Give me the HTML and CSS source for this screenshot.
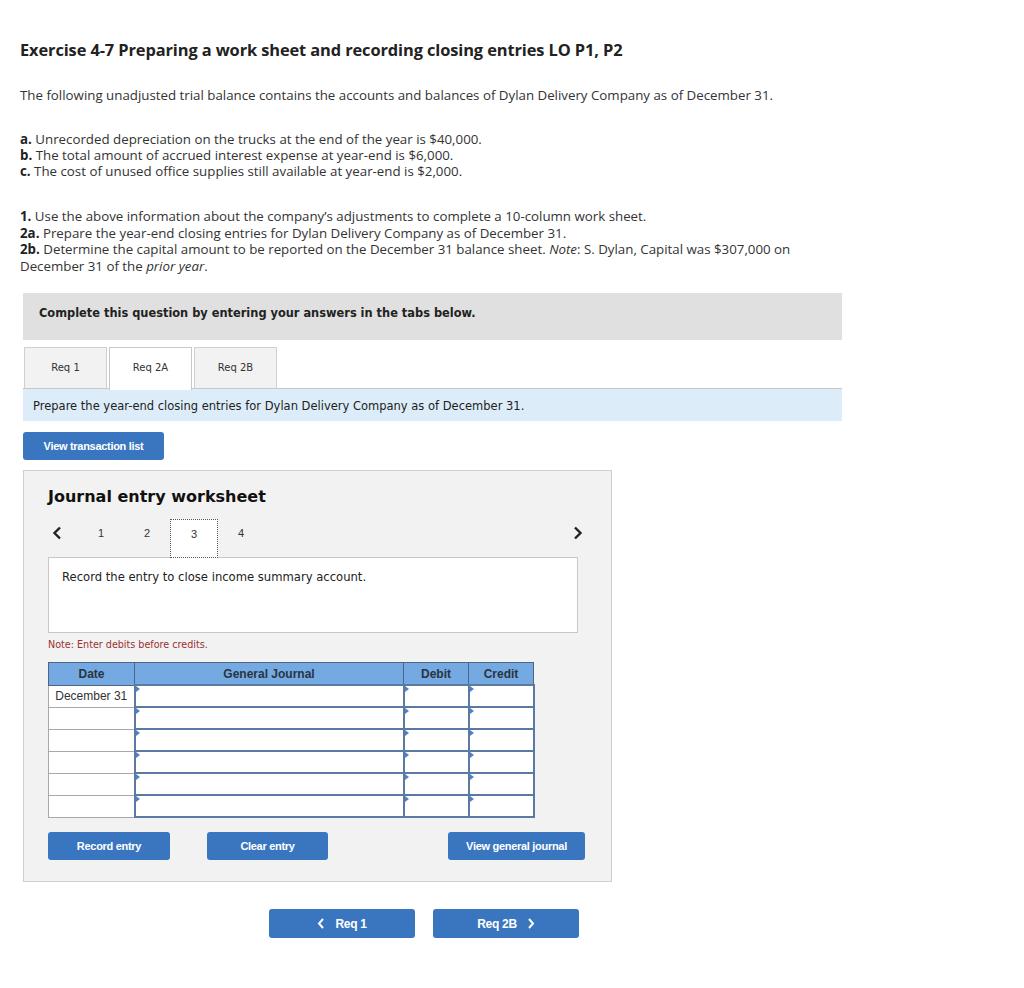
FILE: index.html
```html
<!DOCTYPE html>
<html lang="en">
<head>
<meta charset="UTF-8">
<title>Exercise 4-7</title>
<link rel="stylesheet" href="styles.css">
</head>
<body>

<h1 class="title">Exercise 4-7 Preparing a work sheet and recording closing entries LO P1, P2</h1>

<p class="intro">The following unadjusted trial balance contains the accounts and balances of Dylan Delivery Company as of December 31.</p>

<div class="facts">
  <div><b>a.</b> Unrecorded depreciation on the trucks at the end of the year is $40,000.</div>
  <div><b>b.</b> The total amount of accrued interest expense at year-end is $6,000.</div>
  <div><b>c.</b> The cost of unused office supplies still available at year-end is $2,000.</div>
</div>

<div class="reqs">
  <div><b>1.</b> Use the above information about the company’s adjustments to complete a 10-column work sheet.</div>
  <div><b>2a.</b> Prepare the year-end closing entries for Dylan Delivery Company as of December 31.</div>
  <div><b>2b.</b> Determine the capital amount to be reported on the December 31 balance sheet. <i>Note</i>: S. Dylan, Capital was $307,000 on December 31 of the <i>prior year</i>.</div>
</div>

<div class="question">
  <div class="banner">Complete this question by entering your answers in the tabs below.</div>

  <div class="tabs">
    <div class="tab">Req 1</div>
    <div class="tab active">Req 2A</div>
    <div class="tab">Req 2B</div>
  </div>
  <div class="instruction">Prepare the year-end closing entries for Dylan Delivery Company as of December 31.</div>

  <button class="btn btn-list">View transaction list</button>

  <div class="worksheet">
    <h2>Journal entry worksheet</h2>

    <div class="pager">
      <span class="arrow">
        <svg width="10" height="14" viewBox="0 0 10 14"><path d="M8 1.5 L2.5 7 L8 12.5" fill="none" stroke="#222" stroke-width="2.4"/></svg>
      </span>
      <span class="page">1</span>
      <span class="page">2</span>
      <span class="page current">3</span>
      <span class="page">4</span>
      <span class="arrow arrow-right">
        <svg width="10" height="14" viewBox="0 0 10 14"><path d="M2 1.5 L7.5 7 L2 12.5" fill="none" stroke="#222" stroke-width="2.4"/></svg>
      </span>
    </div>

    <div class="entry-box">Record the entry to close income summary account.</div>

    <div class="note">Note: Enter debits before credits.</div>

    <table class="journal">
      <thead>
        <tr>
          <th class="c-date">Date</th>
          <th class="c-gj">General Journal</th>
          <th class="c-amt">Debit</th>
          <th class="c-amt">Credit</th>
        </tr>
      </thead>
      <tbody id="journal-rows"></tbody>
    </table>

    <div class="actions">
      <button class="btn btn-record">Record entry</button>
      <button class="btn btn-clear">Clear entry</button>
      <button class="btn btn-gj">View general journal</button>
    </div>
  </div>

  <div class="nav">
    <button class="btn btn-nav">
      <svg width="8" height="11" viewBox="0 0 8 11"><path d="M6 1 L2 5.5 L6 10" fill="none" stroke="#fff" stroke-width="2"/></svg>
      Req 1
    </button>
    <button class="btn btn-nav">
      Req 2B
      <svg width="8" height="11" viewBox="0 0 8 11"><path d="M2 1 L6 5.5 L2 10" fill="none" stroke="#fff" stroke-width="2"/></svg>
    </button>
  </div>
</div>

<script>
  var rows = document.getElementById('journal-rows');
  for (var i = 0; i < 6; i++) {
    var tr = document.createElement('tr');
    tr.innerHTML =
      '<td class="date">' + (i === 0 ? 'December 31' : '') + '</td>' +
      '<td class="in"></td><td class="in"></td><td class="in"></td>';
    rows.appendChild(tr);
  }
</script>
</body>
</html>
```

FILE: styles.css
```css
body {
  margin: 0;
  padding: 0 20px;
  font-family: "Open Sans", Lato, sans-serif;
  font-size: 13.3px;
  color: #333;
}

.title {
  margin: 40px 0 0;
  font-size: 16.4px;
  line-height: 20px;
  font-weight: bold;
  letter-spacing: -0.1px;
  color: #222;
}

.intro {
  margin: 27px 0 0;
  line-height: 16px;
}

.facts {
  margin-top: 28px;
  line-height: 16px;
}

.reqs {
  margin-top: 29px;
  line-height: 16.5px;
  width: 800px;
}

.facts b, .reqs b {
  color: #222;
}

.question {
  margin-left: 3px;
  width: 819px;
  font-family: "DejaVu Sans", Verdana, sans-serif;
}

.banner {
  margin-top: 19px;
  height: 47px;
  line-height: 40px;
  padding-left: 16px;
  background: #e0e0e0;
  font-size: 11.4px;
  font-weight: bold;
  color: #222;
}

.tabs {
  display: flex;
  gap: 2px;
  margin-top: 7px;
  padding-left: 1px;
}

.tab {
  width: 81px;
  height: 40px;
  line-height: 40px;
  text-align: center;
  font-size: 10px;
  background: #f2f2f2;
  border: 1px solid #d0d0d0;
  border-bottom: none;
  color: #333;
}

.tab.active {
  background: #fff;
  border-color: #c8c8c8;
  height: 42px;
  margin-bottom: -2px;
  position: relative;
  z-index: 1;
}

.instruction {
  border-top: 1px solid #c8c8c8;
  background: #dcedf9;
  height: 32px;
  line-height: 34px;
  padding-left: 10px;
  font-size: 11.5px;
  color: #222;
}

.btn {
  border: none;
  border-radius: 3px;
  background: #3a76bf;
  color: #fff;
  font-family: "Liberation Sans", Arial, sans-serif;
  font-weight: bold;
  font-size: 11px;
  letter-spacing: -0.3px;
  cursor: pointer;
}

.btn-list {
  display: block;
  margin-top: 11px;
  width: 141px;
  height: 28px;
}

.worksheet {
  margin-top: 10px;
  width: 539px;
  height: 387px;
  padding: 13px 24px 10px;
  background: #f2f2f2;
  border: 1px solid #cfcfcf;
}

.worksheet h2 {
  margin: 0;
  font-size: 16px;
  line-height: 26px;
  color: #111;
}

.pager {
  display: flex;
  align-items: flex-start;
  margin-top: 9px;
  height: 38px;
  font-size: 11px;
  color: #333;
}

.arrow {
  display: flex;
  align-items: center;
  height: 28px;
  width: 26px;
  padding-left: 4px;
}

.arrow-right {
  margin-left: auto;
  width: auto;
  padding: 0 4px 0 0;
}

.page {
  width: 46px;
  line-height: 28px;
  text-align: center;
  font-family: "Liberation Sans", Arial, sans-serif;
}

.page.current {
  height: 37px;
  background: #fff;
  border: 1px dotted #555;
  position: relative;
  z-index: 1;
}

.entry-box {
  height: 76px;
  padding: 12px 13px 0;
  box-sizing: border-box;
  width: 530px;
  background: #fff;
  border: 1px solid #c8c8c8;
  font-size: 11.6px;
  color: #222;
}

.note {
  margin-top: 6px;
  font-size: 9.6px;
  color: #9a3030;
}

.journal {
  margin-top: 12px;
  border-collapse: collapse;
  font-family: "Liberation Sans", Arial, sans-serif;
  font-size: 12px;
  border: 1px solid #8a98a8;
}

.journal th {
  height: 21px;
  padding: 0;
  background: #74a9e2;
  color: #2a3440;
  font-weight: bold;
  border: 1px solid #4d6482;
}

.journal .c-date { width: 85px; }
.journal .c-gj { width: 268px; }
.journal .c-amt { width: 64px; }

.journal td {
  height: 20px;
  padding: 0;
  background: #fff;
}

.journal td.date {
  border: 1px solid #a8a8a8;
  text-align: center;
  color: #333;
}

.journal td.in {
  border: 2px solid #5b7aa3;
  position: relative;
}

.journal td.in::before {
  content: "";
  position: absolute;
  top: 0;
  left: 0;
  border-top: 3px solid transparent;
  border-bottom: 3px solid transparent;
  border-left: 4px solid #4f82c4;
}

.actions {
  display: flex;
  margin-top: 14px;
}

.actions .btn {
  height: 28px;
}

.btn-record { width: 122px; }
.btn-clear { width: 121px; margin-left: 37px; }
.btn-gj { width: 137px; margin-left: auto; margin-right: 2px; }

.nav {
  display: flex;
  gap: 18px;
  margin: 27px 0 40px 246px;
}

.btn-nav {
  display: flex;
  align-items: center;
  justify-content: center;
  gap: 10px;
  width: 146px;
  height: 29px;
  font-size: 12px;
}
```
